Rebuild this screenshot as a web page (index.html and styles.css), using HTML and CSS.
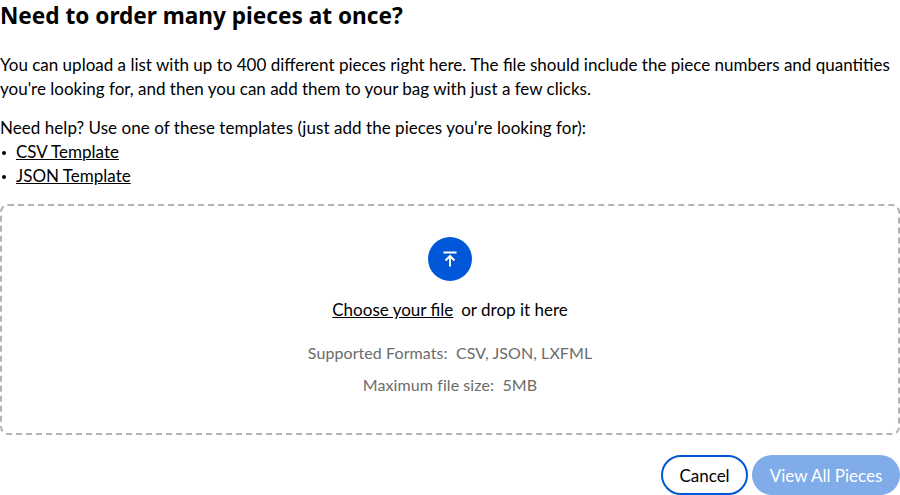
FILE: index.html
```html
<!DOCTYPE html>
<html lang="en">
<head>
    <meta charset="UTF-8">
    <title>Upload a list</title>
    <link rel="stylesheet" href="styles.css">
</head>
<body>
    <div class="page">
        <h1>Need to order many pieces at once?</h1>
        <p class="intro">You can upload a list with up to 400 different pieces right here. The file should include the piece numbers and quantities you're looking for, and then you can add them to your bag with just a few clicks.</p>
        <p class="help">Need help? Use one of these templates (just add the pieces you're looking for):</p>
        <ul class="templates">
            <li><a href="#">CSV Template</a></li>
            <li><a href="#">JSON Template</a></li>
        </ul>

        <div class="dropzone">
            <div class="upload-icon">
                <svg width="14" height="16" viewBox="0 0 14 16" fill="none" stroke="#fff" stroke-width="2">
                    <path d="M0.5 1.5H13.5"/>
                    <path d="M7 15.5V5.5"/>
                    <path d="M2.5 9.5L7 5L11.5 9.5"/>
                </svg>
            </div>
            <p class="choose"><a href="#">Choose your file</a><span>or drop it here</span></p>
            <p class="note">Supported Formats:&nbsp; CSV, JSON, LXFML</p>
            <p class="note">Maximum file size:&nbsp; 5MB</p>
        </div>

        <div class="actions">
            <button class="btn btn-cancel">Cancel</button>
            <button class="btn btn-view">View All Pieces</button>
        </div>
    </div>
</body>
</html>
```

FILE: styles.css
```css
* {
    margin: 0;
    padding: 0;
    box-sizing: border-box;
}

body {
    font-family: 'Lato', 'Noto Sans', sans-serif;
    font-size: 17px;
    line-height: 24px;
    color: #000;
    background: #fff;
    overflow: hidden;
}

.page {
    width: 900px;
    height: 495px;
}

h1 {
    font-family: 'Noto Sans', sans-serif;
    font-size: 22.6px;
    line-height: 31px;
    font-weight: 700;
    margin-bottom: 22px;
}

.intro {
    margin-bottom: 15px;
}

.help {
    letter-spacing: 0.05px;
}

.templates {
    list-style: none;
}

.templates li {
    padding-left: 16px;
    position: relative;
}

.templates li::before {
    content: '';
    position: absolute;
    left: 2px;
    top: 11px;
    width: 4px;
    height: 4px;
    border-radius: 50%;
    background: #000;
}

a {
    color: #000;
    text-decoration: underline;
}

.dropzone {
    margin-top: 16px;
    height: 231px;
    border: 2px dashed #b3b3b3;
    border-radius: 8px;
    display: flex;
    flex-direction: column;
    align-items: center;
    padding-top: 31px;
}

.upload-icon {
    width: 44px;
    height: 44px;
    border-radius: 50%;
    background: #0057d8;
    display: flex;
    align-items: center;
    justify-content: center;
    margin-bottom: 17px;
}

.choose {
    margin-bottom: 19px;
}

.choose span {
    margin-left: 8px;
}

.note {
    font-size: 16px;
    letter-spacing: 0.08px;
    color: #6b6b6b;
    margin-bottom: 8px;
}

.actions {
    display: flex;
    justify-content: flex-end;
    gap: 4px;
    margin-top: 20px;
}

.btn {
    font-family: 'Lato', 'Noto Sans', sans-serif;
    font-size: 17px;
    height: 40px;
    border-radius: 20px;
}

.btn-cancel {
    width: 87px;
    background: #fff;
    border: 2px solid #0057d8;
    color: #000;
}

.btn-view {
    width: 148px;
    background: #80ace9;
    border: none;
    color: #fff;
}
```
